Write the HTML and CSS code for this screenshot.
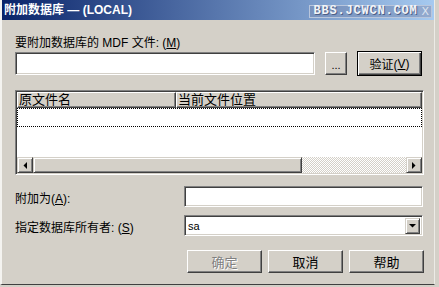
FILE: index.html
```html
<!DOCTYPE html>
<html lang="zh-CN">
<head>
    <meta charset="UTF-8">
    <title>附加数据库</title>
    <link rel="stylesheet" href="styles.css">
</head>
<body>

    <div class="dialog">
        <div class="titlebar">
            <span class="title">附加数据库 — (LOCAL)</span>
            <span class="mark">
                <span class="mark-text">BBS.JCWCN.COM</span>
                <span class="mark-x">X</span>
            </span>
        </div>

        <div class="content">
            <div class="label">要附加数据库的 MDF 文件: (<u>M</u>)</div>
            <div class="file-row">
                <div class="field file-field"></div>
                <div class="btn browse">...</div>
                <div class="btn default">验证(<u>V</u>)</div>
            </div>

            <!-- 文件列表 -->
            <div class="list">
                <div class="list-head">
                    <div class="col col-name">原文件名</div>
                    <div class="col col-path">当前文件位置</div>
                </div>
                <div class="list-body">
                    <div class="row-focus"></div>
                </div>
                <div class="hscroll">
                    <div class="sb-btn">
                        <svg width="4" height="7" viewBox="0 0 4 7"><path d="M4 0 L4 7 L0.5 3.5 Z" fill="#000"/></svg>
                    </div>
                    <div class="sb-thumb"></div>
                    <div class="sb-track"></div>
                    <div class="sb-btn">
                        <svg width="4" height="7" viewBox="0 0 4 7"><path d="M0 0 L0 7 L3.5 3.5 Z" fill="#000"/></svg>
                    </div>
                </div>
            </div>

            <div class="form-row first">
                <div class="form-label">附加为(<u>A</u>):</div>
                <div class="field form-field"></div>
            </div>
            <div class="form-row">
                <div class="form-label">指定数据库所有者: (<u>S</u>)</div>
                <div class="field form-field combo">
                    <span class="combo-value">sa</span>
                    <div class="combo-btn">
                        <svg width="7" height="4" viewBox="0 0 7 4"><path d="M0 0 L7 0 L3.5 3.5 Z" fill="#000"/></svg>
                    </div>
                </div>
            </div>

            <div class="buttons">
                <div class="btn action disabled">确定</div>
                <div class="btn action">取消</div>
                <div class="btn action">帮助</div>
            </div>
        </div>
    </div>

</body>
</html>
```

FILE: styles.css
```css
 :root {
     --face: #d4d0c8;
     --shadow: #808080;
     --dark: #404040;
     --light: #fff;
 }

 * {
     box-sizing: border-box;
 }

 body {
     margin: 0;
     background-color: var(--face);
     font-family: "Liberation Sans", "Noto Sans CJK SC", sans-serif;
     font-size: 12px;
     color: #000;
 }

 u {
     text-decoration: underline;
 }

 .dialog {
     width: 435px;
     height: 285px;
     background-color: var(--face);
     border-left: 2px solid #f4f3f0;
     border-bottom: 1px solid var(--dark);
     border-right: 1px solid #ecebe6;
 }

 /* 标题栏 */
 .titlebar {
     height: 20px;
     display: flex;
     align-items: center;
     justify-content: space-between;
     padding: 0 2px 0 2px;
     background: linear-gradient(to right, #0a246a, #a6caf0);
 }

 .title {
     color: #fff;
     font-weight: bold;
     font-size: 12px;
     line-height: 20px;
 }

 .mark {
     display: flex;
     height: 13px;
     margin-top: 2px;
     border: 1px solid #b9c6dc;
     background-color: rgba(120, 140, 180, 0.55);
 }

 .mark-text {
     font-family: "Liberation Mono", monospace;
     font-weight: bold;
     font-size: 12px;
     line-height: 11px;
     letter-spacing: 0.8px;
     color: #f2f4f8;
     text-shadow: 1px 1px #4d5f86;
     padding: 0 2px 0 3px;
 }

 .mark-x {
     font-family: "DejaVu Sans", sans-serif;
     font-size: 11px;
     line-height: 11px;
     color: #dde4f0;
     padding: 0 2px;
     background-color: rgba(150, 170, 205, 0.6);
 }

 .content {
     padding: 16px 0 0 13px;
 }

 .label {
     height: 14px;
     line-height: 14px;
     margin-bottom: 1px;
 }

 /* 凹陷输入框 */
 .field {
     background-color: #fff;
     border: 1px solid;
     border-color: var(--shadow) var(--light) var(--light) var(--shadow);
     box-shadow: inset 1px 1px var(--dark), inset -1px -1px var(--face);
 }

 /* 凸起按钮 */
 .btn {
     display: flex;
     align-items: center;
     justify-content: center;
     background-color: var(--face);
     border: 1px solid;
     border-color: var(--light) var(--dark) var(--dark) var(--light);
     box-shadow: inset -1px -1px var(--shadow);
 }

 .file-row {
     display: flex;
     align-items: center;
     gap: 10px;
     height: 25px;
 }

 .file-field {
     width: 300px;
     height: 23px;
 }

 .browse {
     width: 22px;
     height: 23px;
     font-size: 11px;
     padding-top: 2px;
 }

 .default {
     width: 65px;
     height: 25px;
     border-color: #000;
     box-shadow: inset 1px 1px var(--light), inset -1px -1px var(--dark), inset -2px -2px var(--shadow);
 }

 /* 列表 */
 .list {
     width: 409px;
     height: 85px;
     margin-top: 14px;
     display: flex;
     flex-direction: column;
     background-color: #fff;
     border: 1px solid;
     border-color: var(--shadow) var(--light) var(--light) var(--shadow);
     box-shadow: inset 1px 1px var(--dark), inset -1px -1px var(--face);
     padding: 1px;
 }

 .list-head {
     display: flex;
     height: 16px;
 }

 .col {
     height: 16px;
     line-height: 14px;
     padding-left: 1px;
     background-color: var(--face);
     border: 1px solid;
     border-color: var(--light) var(--dark) var(--dark) var(--light);
     box-shadow: inset -1px -1px var(--shadow);
     font-size: 13px;
     overflow: hidden;
 }

 .col-name {
     width: 159px;
 }

 .col-path {
     flex: 1;
 }

 .list-body {
     flex: 1;
 }

 .row-focus {
     height: 19px;
     border: 1px dotted #000;
 }

 .hscroll {
     display: flex;
     height: 16px;
 }

 .sb-btn {
     width: 16px;
     height: 16px;
     display: flex;
     align-items: center;
     justify-content: center;
     background-color: var(--face);
     border: 1px solid;
     border-color: var(--face) var(--dark) var(--dark) var(--face);
     box-shadow: inset 1px 1px var(--light), inset -1px -1px var(--shadow);
 }

 .sb-thumb {
     width: 269px;
     background-color: var(--face);
     border: 1px solid;
     border-color: var(--face) var(--dark) var(--dark) var(--face);
     box-shadow: inset 1px 1px var(--light), inset -1px -1px var(--shadow);
 }

 .sb-track {
     flex: 1;
     background: repeating-conic-gradient(#fff 0 25%, var(--face) 0 50%) 0 0 / 2px 2px;
 }

 /* 下部表单 */
 .form-row {
     display: flex;
     align-items: center;
     margin-top: 8px;
     height: 21px;
 }

 .form-row.first {
     margin-top: 11px;
 }

 .form-label {
     width: 169px;
     padding-top: 2px;
 }

 .form-field {
     width: 239px;
     height: 21px;
 }

 .combo {
     display: flex;
     align-items: center;
     justify-content: space-between;
     padding: 2px 2px 2px 3px;
 }

 .combo-value {
     font-family: "Liberation Sans", sans-serif;
     font-size: 11px;
 }

 .combo-btn {
     width: 15px;
     height: 16px;
     display: flex;
     align-items: center;
     justify-content: center;
     background-color: var(--face);
     border: 1px solid;
     border-color: var(--face) var(--dark) var(--dark) var(--face);
     box-shadow: inset 1px 1px var(--light), inset -1px -1px var(--shadow);
 }

 .buttons {
     display: flex;
     gap: 6px;
     margin-top: 14px;
     padding-left: 172px;
 }

 .action {
     width: 75px;
     height: 23px;
     font-size: 13px;
 }

 .disabled {
     color: var(--shadow);
     text-shadow: 1px 1px #fff;
 }
```
